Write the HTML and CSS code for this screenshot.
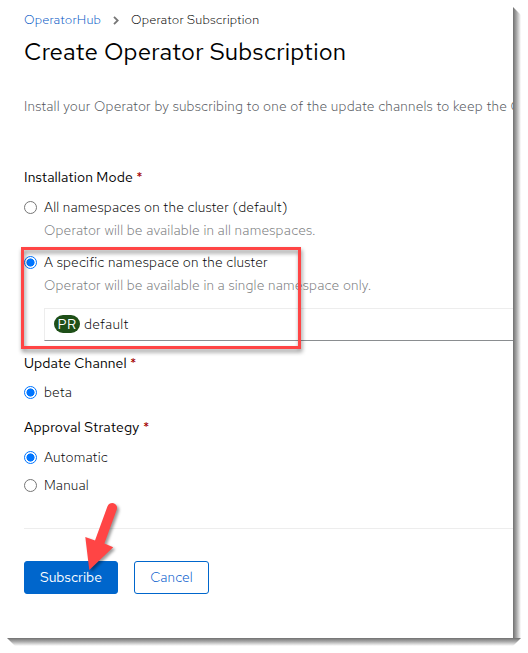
FILE: index.html
```html
<!DOCTYPE html>
<html lang="en">
<head>
<meta charset="utf-8">
<title>Create Operator Subscription</title>
<link rel="stylesheet" href="styles.css">
</head>
<body>
<div class="frame">
  <main class="page">
    <nav class="breadcrumb">
      <a class="crumb-link">OperatorHub</a>
      <svg class="chevron" viewBox="0 0 6 9" width="6" height="9"><path d="M1 .8 4.7 4.5 1 8.2"/></svg>
      <span class="crumb-current">Operator Subscription</span>
    </nav>
    <h1 class="title">Create Operator Subscription</h1>
    <p class="intro">Install your Operator by subscribing to one of the update channels to keep the O</p>
    <section class="group mode">
      <h2 class="label">Installation Mode <span class="required">*</span></h2>
      <label class="option"><i class="radio"></i><span>All namespaces on the cluster (default)</span></label>
      <p class="help">Operator will be available in all namespaces.</p>
      <label class="option specific-row"><i class="radio checked"></i><span>A specific namespace on the cluster</span></label>
      <p class="help">Operator will be available in a single namespace only.</p>
      <div class="select"><span class="badge">PR</span><span class="value">default</span></div>
      <div class="highlight"></div>
    </section>
    <section class="group channel">
      <h2 class="label">Update Channel <span class="required">*</span></h2>
      <label class="option"><i class="radio checked"></i><span>beta</span></label>
    </section>
    <section class="group approval">
      <h2 class="label">Approval Strategy <span class="required">*</span></h2>
      <label class="option"><i class="radio checked"></i><span>Automatic</span></label>
      <label class="option manual"><i class="radio"></i><span>Manual</span></label>
    </section>
    <div class="actions">
      <button class="button primary">Subscribe</button>
      <button class="button secondary">Cancel</button>
      <svg class="arrow" viewBox="0 0 50 80" width="50" height="80"><path d="M27.4 6.4A4.9 4.9 0 0 1 36.8 9.6L24.4 43.6 33.2 47.3 9.3 70 5.3 37 15 40.4Z"/></svg>
    </div>
  </main>
  <div class="shade shade-right"></div>
  <div class="shade shade-bottom"></div>
</div>
</body>
</html>
```

FILE: styles.css
```css
* { box-sizing: border-box; }
body {
  margin: 0;
  background: #fff;
  color: #000;
  font: 300 14px/20px "Red Hat Text", Inter, "Open Sans", sans-serif;
  letter-spacing: .18px;
}
h1, h2, p { margin: 0; font-weight: 400; white-space: nowrap; }
.frame { position: relative; width: 528px; height: 653px; overflow: hidden; }
.page { width: 513px; height: 638px; padding: 10px 0 0 24px; overflow: hidden; background: #fff; }
.breadcrumb { display: flex; align-items: center; height: 20px; font-size: 13px; letter-spacing: .17px; white-space: nowrap; }
.crumb-link { width: 78px; color: #0055c4; }
.chevron { margin: 0 12px 0 11px; fill: none; stroke: #777; stroke-width: 1.8; }
.title { margin-top: 3px; font-size: 24px; line-height: 38px; letter-spacing: .22px; }
.intro { margin-top: 25px; color: #505459; font-weight: 300; }
.label { height: 20px; font-size: 14px; letter-spacing: .1px; }
.approval .label { letter-spacing: .2px; }
.required { color: #a30000; }
.mode { position: relative; margin-top: 51px; height: 175px; }
.option { display: flex; align-items: center; height: 20px; margin-top: 10px; white-space: nowrap; }
.radio { width: 13px; height: 13px; margin-right: 7px; border: 1px solid #767676; border-radius: 50%; }
.checked { border-color: #0075ff; background: radial-gradient(circle, #0075ff 0 3.8px, #fff 4.3px); }
.help { margin: 3px 0 0 20px; color: #77797b; font-weight: 300; }
.specific-row { margin-top: 12px; }
.select { display: flex; align-items: center; height: 33px; margin: 13px 0 0 20px; padding: 0 0 1px 9px; border: 1px solid #ededed; border-right: 0; border-bottom-color: #8a8d90; }
.badge { width: 26px; height: 18px; margin-right: 4px; border-radius: 9px; background: #1e4f18; color: #fff; line-height: 18px; text-align: center; font-weight: 400; letter-spacing: .3px; }
.value { letter-spacing: .3px; }
.highlight { position: absolute; left: -3px; top: 80px; width: 280px; height: 102px; border: 3px solid #ff4545; filter: drop-shadow(1px 3px 2px rgba(0,0,0,.45)); }
.channel { margin-top: 11px; }
.channel .option { margin-top: 9px; }
.approval { margin-top: 15px; }
.approval .manual { margin-top: 8px; }
.actions { position: relative; display: flex; gap: 16px; margin-top: 33px; padding-top: 32px; border-top: 1px solid #ededed; }
.button { height: 33px; padding: 0 0 2px; border: 1px solid #06c; border-radius: 3px; font: 400 14px/20px "Red Hat Text", Inter, "Open Sans", sans-serif; }
.primary { width: 94px; background: #06c; color: #fff; }
.secondary { width: 75px; background: #fff; color: #0058cc; font-weight: 300; letter-spacing: .1px; }
.arrow { position: absolute; left: 56px; top: -29px; overflow: visible; fill: #ff4545; filter: drop-shadow(2px 2px 1.5px rgba(0,0,0,.4)); }
.shade { position: absolute; }
.shade-right { left: 513px; top: 7px; width: 8px; height: 639px; background: linear-gradient(90deg, #707070, #aaa 45%, #fff); clip-path: polygon(0 0, 100% 8px, 100% 631px, 0 631px); }
.shade-bottom { left: 7px; top: 638px; width: 514px; height: 8px; background: linear-gradient(#707070, #aaa 45%, #fff); clip-path: polygon(0 0, 506px 0, 514px 0, 506px 100%, 8px 100%); }
```
